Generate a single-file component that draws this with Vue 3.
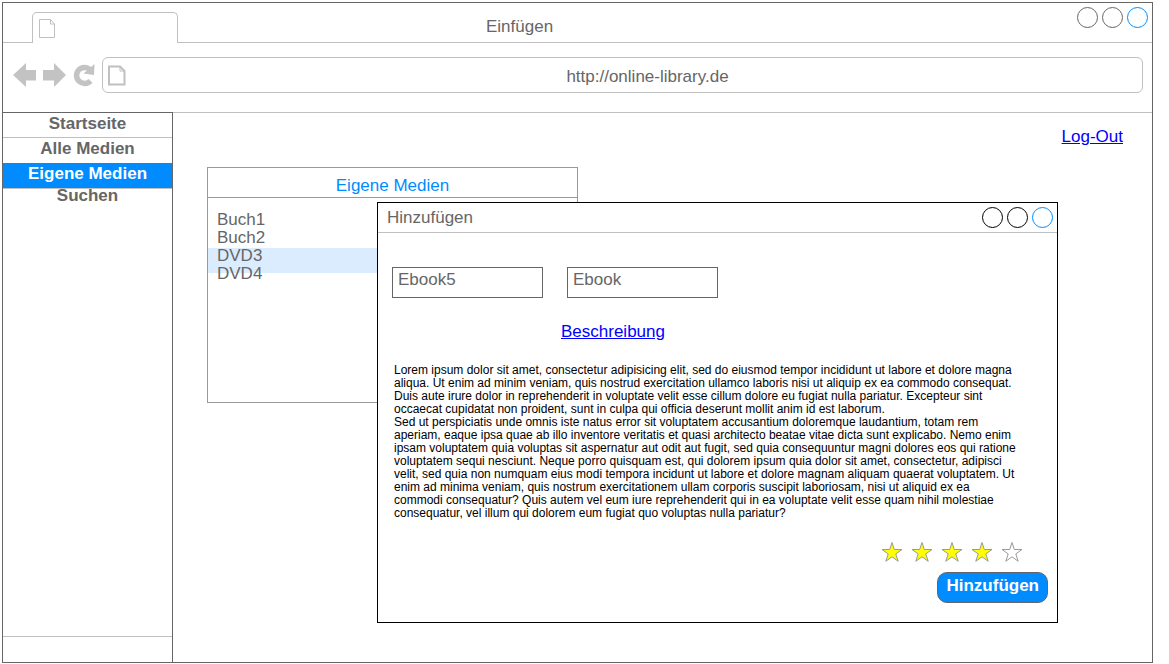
<script setup>
import { ref } from 'vue'

const address = ref('http://online-library.de')
const navItems = ['Startseite', 'Alle Medien', 'Eigene Medien', 'Suchen']
const activeNav = ref('Eigene Medien')
const media = ['Buch1', 'Buch2', 'DVD3', 'DVD4']
const selectedMedium = ref('DVD3')
const mediumName = ref('Ebook5')
const mediumType = ref('Ebook')
const rating = ref(4)
const controls = ['Minimieren', 'Maximieren', 'Schließen']
const description = `Lorem ipsum dolor sit amet, consectetur adipisicing elit, sed do eiusmod tempor incididunt ut labore et dolore magna
aliqua. Ut enim ad minim veniam, quis nostrud exercitation ullamco laboris nisi ut aliquip ex ea commodo consequat.
Duis aute irure dolor in reprehenderit in voluptate velit esse cillum dolore eu fugiat nulla pariatur. Excepteur sint
occaecat cupidatat non proident, sunt in culpa qui officia deserunt mollit anim id est laborum.
Sed ut perspiciatis unde omnis iste natus error sit voluptatem accusantium doloremque laudantium, totam rem
aperiam, eaque ipsa quae ab illo inventore veritatis et quasi architecto beatae vitae dicta sunt explicabo. Nemo enim
ipsam voluptatem quia voluptas sit aspernatur aut odit aut fugit, sed quia consequuntur magni dolores eos qui ratione
voluptatem sequi nesciunt. Neque porro quisquam est, qui dolorem ipsum quia dolor sit amet, consectetur, adipisci
velit, sed quia non numquam eius modi tempora incidunt ut labore et dolore magnam aliquam quaerat voluptatem. Ut
enim ad minima veniam, quis nostrum exercitationem ullam corporis suscipit laboriosam, nisi ut aliquid ex ea
commodi consequatur? Quis autem vel eum iure reprehenderit qui in ea voluptate velit esse quam nihil molestiae
consequatur, vel illum qui dolorem eum fugiat quo voluptas nulla pariatur?`
</script>

<template>
  <div class="page">
    <div class="window">
      <header class="tabstrip">
        <div class="strip-start"></div>
        <div class="tab">
          <svg width="17" height="20" viewBox="0 0 17 20" aria-hidden="true">
            <path d="M.5.5H11.5L15.500 5V18.500H.5Z M11.500.5V5H15.500" fill="none" stroke="#c0c0c0" />
          </svg>
        </div>
        <div class="strip-main">
          <h1 class="window-title">Einfügen</h1>
          <div class="controls">
            <button v-for="c in controls" :key="c" class="control" type="button" :aria-label="c"></button>
          </div>
        </div>
      </header>

      <div class="toolbar">
        <div class="history">
          <button type="button" class="icon-button" aria-label="Zurück">
            <svg width="24" height="26" viewBox="0 0 24 26"><path d="M0 13 13 1V8H23V18.500H13V25Z" fill="#c3c3c3" /></svg>
          </button>
          <button type="button" class="icon-button" aria-label="Vorwärts">
            <svg width="24" height="26" viewBox="0 0 24 26"><path d="M23 13 11 1V8H0V18.500H11V25Z" fill="#c3c3c3" /></svg>
          </button>
          <button type="button" class="icon-button" aria-label="Neu laden">
            <svg width="24" height="26" viewBox="0 0 24 26">
              <path d="M17 7.500A8 8 0 1 0 17.500 18.800" fill="none" stroke="#c3c3c3" stroke-width="5.500" />
              <path d="M21.500 2 21 13 10.500 11.500Z" fill="#c3c3c3" />
            </svg>
          </button>
        </div>
        <label class="address">
          <svg width="19" height="21" viewBox="0 0 19 21" aria-hidden="true">
            <path d="M1 1.500H12L16.500 6V19.500H1Z" fill="none" stroke="#c0c0c0" stroke-width="2" />
            <path d="M12 1V6H17" fill="none" stroke="#c0c0c0" />
          </svg>
          <input v-model="address" type="text" aria-label="Adresse" />
        </label>
      </div>

      <div class="body">
        <nav class="sidebar">
          <a
            v-for="item in navItems"
            :key="item"
            href="#"
            class="nav-item"
            :class="{ active: item === activeNav }"
            @click.prevent="activeNav = item"
          >{{ item }}</a>
          <div class="sidebar-foot"></div>
        </nav>

        <main class="content">
          <div class="account"><a href="#" class="link">Log-Out</a></div>

          <section class="panel">
            <h2>Eigene Medien</h2>
            <ul>
              <li
                v-for="m in media"
                :key="m"
                :class="{ selected: m === selectedMedium }"
                @click="selectedMedium = m"
              ><span>{{ m }}</span></li>
            </ul>
          </section>

          <section class="dialog" role="dialog" aria-labelledby="dialog-title">
            <header class="dialog-bar">
              <h2 id="dialog-title">Hinzufügen</h2>
              <div class="controls dark">
                <button v-for="c in controls" :key="c" class="control" type="button" :aria-label="c"></button>
              </div>
            </header>
            <form class="form" @submit.prevent>
              <div class="fields">
                <input v-model="mediumName" type="text" aria-label="Name" />
                <input v-model="mediumType" type="text" aria-label="Typ" />
              </div>
              <div class="details"><a href="#" class="link">Beschreibung</a></div>
              <p class="description">{{ description }}</p>
              <div class="rating" role="radiogroup" aria-label="Bewertung">
                <label v-for="n in 5" :key="n">
                  <input v-model="rating" type="radio" name="rating" :value="n" :aria-label="`${n} Sterne`" />
                  <svg width="22" height="22" viewBox="0 0 22 22" aria-hidden="true">
                    <path
                      d="M11 1.500 13.300 8.500H21L14.800 12.900 17.200 20.300 11 15.800 4.800 20.300 7.200 12.900 1 8.500H8.700Z"
                      :fill="n <= rating ? '#ffff00' : '#ffffff'"
                      stroke="#999"
                    />
                  </svg>
                </label>
              </div>
              <button type="submit" class="submit">Hinzufügen</button>
            </form>
          </section>
        </main>
      </div>
    </div>
  </div>
</template>

<style>
body {
  background: #fff;
}
</style>

<style scoped>
* {
  box-sizing: border-box;
}
.page {
  display: flex;
  min-height: 100vh;
  padding: 2px 16px 1px 2px;
  color: #666;
  font: 17px/20px "Liberation Sans", Arial, sans-serif;
}
h1,
h2,
p,
ul {
  margin: 0;
  padding: 0;
  font-size: 17px;
  font-weight: 400;
  line-height: 20px;
}
button,
input {
  margin: 0;
  padding: 0;
  border: 0;
  background: none;
  color: inherit;
  font: inherit;
}
svg {
  display: block;
}
.window {
  flex: 1;
  display: flex;
  flex-direction: column;
  border: 1px solid #666;
}
.tabstrip {
  display: flex;
  height: 40px;
}
.strip-start {
  width: 29px;
  border-bottom: 1px solid #c0c0c0;
}
.tab {
  width: 146px;
  margin-top: 9px;
  padding: 6px;
  border: 1px solid #c0c0c0;
  border-bottom: 0;
  border-radius: 5px 5px 0 0;
}
.strip-main {
  flex: 1;
  display: flex;
  justify-content: space-between;
  padding: 4px 4px 0 308px;
  border-bottom: 1px solid #c0c0c0;
}
.window-title {
  margin-top: 10px;
}
.controls {
  display: flex;
  gap: 4px;
}
.control {
  width: 21px;
  height: 21px;
  border: 1px solid #666;
  border-radius: 50%;
}
.dark .control {
  border-color: #000;
}
.controls .control:last-child {
  border-color: #008cff;
}
.toolbar {
  display: flex;
  gap: 5px;
  padding: 14px 9px 19px 10px;
}
.history {
  display: flex;
  align-items: center;
  gap: 6px;
}
.icon-button {
  width: 24px;
}
.address {
  flex: 1;
  display: flex;
  align-items: center;
  height: 36px;
  padding-left: 5px;
  border: 1px solid #c0c0c0;
  border-radius: 6px;
}
.address input {
  flex: 1;
  min-width: 0;
  padding: 3px 0 0 26px;
  text-align: center;
}
.body {
  flex: 1;
  display: flex;
}
.sidebar {
  width: 170px;
  display: flex;
  flex-direction: column;
  border-top: 1px solid #666;
  border-right: 1px solid #666;
}
.nav-item {
  height: 25px;
  color: #666;
  font-weight: 700;
  line-height: 22px;
  text-align: center;
  text-decoration: none;
}
.nav-item:first-child {
  border-bottom: 1px solid #c0c0c0;
}
.nav-item.active {
  background: #008cff;
  color: #fff;
}
.nav-item:nth-child(4) {
  border-top: 1px solid #c0c0c0;
  line-height: 13px;
}
.sidebar-foot {
  height: 26px;
  margin-top: auto;
  border-top: 1px solid #c0c0c0;
}
.content {
  position: relative;
  flex: 1;
  padding: 14px 29px 0 34px;
  border-top: 1px solid #c0c0c0;
}
.account {
  display: flex;
  justify-content: flex-end;
}
.link {
  color: #00f;
}
.panel {
  max-width: 371px;
  min-height: 236px;
  margin-top: 20px;
  border: 1px solid #999;
}
.panel h2 {
  padding: 8px 0 1px;
  border-bottom: 1px solid #999;
  color: #008cff;
  text-align: center;
}
.panel ul {
  padding-top: 13px;
  list-style: none;
}
.panel li {
  position: relative;
  padding-left: 9px;
  line-height: 18px;
}
.panel li span {
  position: relative;
  z-index: 1;
}
.panel li.selected::before {
  content: "";
  position: absolute;
  top: 1px;
  right: 0;
  left: 0;
  height: 25px;
  background: #dbecff;
}
.dialog {
  position: absolute;
  z-index: 2;
  top: 89px;
  right: 94px;
  left: 204px;
  border: 1px solid #000;
  background: #fff;
}
.dialog-bar {
  display: flex;
  justify-content: space-between;
  height: 30px;
  padding: 4px 4px 0 9px;
  border-bottom: 1px solid #c0c0c0;
}
.dialog-bar h2 {
  line-height: 22px;
}
.form {
  display: flex;
  flex-direction: column;
  padding: 34px 9px 19px 14px;
}
.fields {
  display: flex;
  gap: 24px;
}
.fields input {
  width: 151px;
  height: 31px;
  padding: 0 5px 6px;
  border: 1px solid #666;
}
.details {
  margin-top: 24px;
  padding-left: 169px;
}
.description {
  margin-top: 22px;
  padding-left: 2px;
  color: #000;
  font-size: 12px;
  line-height: 13px;
  white-space: pre-line;
}
.rating {
  display: flex;
  justify-content: flex-end;
  gap: 8px;
  margin-top: 21px;
  padding-right: 25px;
}
.rating label {
  display: flex;
}
.rating input {
  appearance: none;
  width: 0;
  height: 0;
}
.submit {
  align-self: flex-end;
  height: 31px;
  margin-top: 9px;
  padding: 0 8px 3px;
  border: 1px solid #666;
  border-radius: 10px;
  background: #008cff;
  color: #fff;
  font-weight: 700;
}
</style>
